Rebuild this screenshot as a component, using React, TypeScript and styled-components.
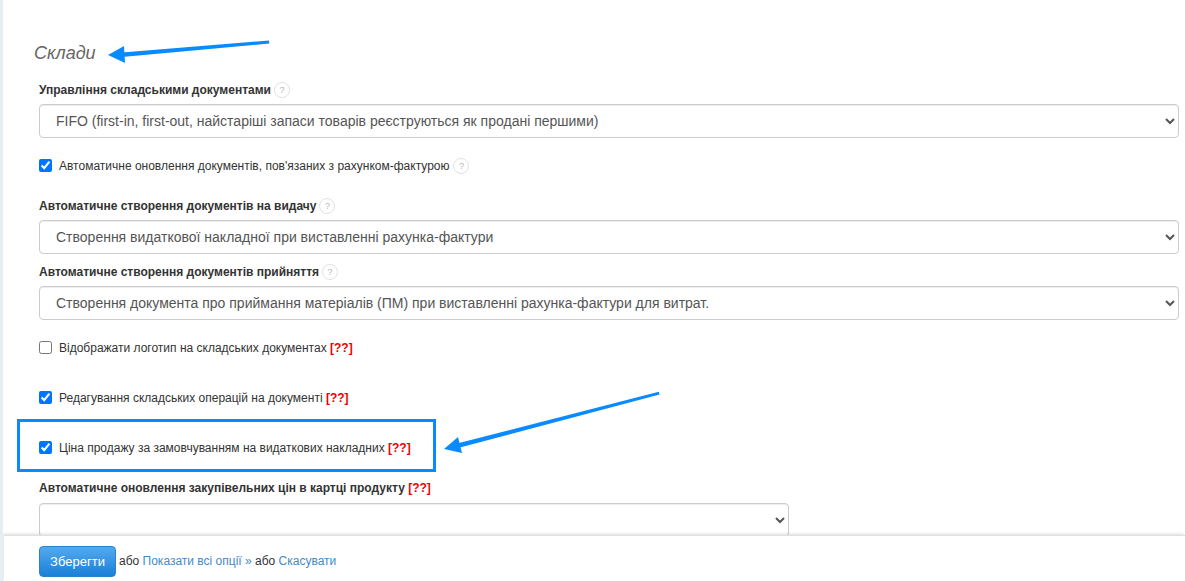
import styled, { createGlobalStyle } from "styled-components";

const GlobalStyle = createGlobalStyle`
  html, body {
    margin: 0;
    padding: 0;
    height: 100%;
    overflow: hidden;
    background: #fff;
    font-family: "Liberation Sans", Arial, sans-serif;
    font-size: 12px;
    color: #333;
  }
`;

const Page = styled.div`
  position: relative;
  height: 581px;
  box-sizing: border-box;
  overflow: hidden;
  border-left: 3px solid #e6edf5;
`;

const Content = styled.div`
  display: flex;
  flex-direction: column;
  padding: 41px 6px 0 36px;
`;

const Heading = styled.h3`
  margin: 0 0 0 -5px;
  height: 24px;
  line-height: 24px;
  font-size: 18px;
  font-weight: 400;
  font-style: italic;
  color: #666;
`;

const Label = styled.label<{ $top: number }>`
  display: flex;
  align-items: center;
  gap: 3px;
  box-sizing: border-box;
  height: 16px;
  padding-top: 2px;
  margin-top: ${(p) => p.$top}px;
  margin-bottom: 7px;
  font-weight: 700;
  line-height: 16px;
`;

const Help = styled.span`
  display: inline-flex;
  align-items: center;
  justify-content: center;
  box-sizing: border-box;
  width: 16px;
  height: 16px;
  border: 1px solid #e2e2e2;
  border-radius: 50%;
  font-size: 9px;
  font-weight: 400;
  color: #b5b5b5;
`;

const Missing = styled.a`
  color: #e00;
  font-weight: 700;
`;

const Select = styled.select<{ $narrow?: boolean }>`
  box-sizing: border-box;
  flex: none;
  width: ${(p) => (p.$narrow ? "750px" : "100%")};
  height: 34px;
  margin-top: ${(p) => (p.$narrow ? "1px" : "0")};
  padding: 6px 12px;
  border: 1px solid #ccc;
  border-radius: 4px;
  background: #fff;
  font-family: inherit;
  font-size: 14px;
  color: #555;
  box-shadow: inset 0 1px 1px rgba(0, 0, 0, 0.075);
`;

const CheckRow = styled.label<{ $top: number }>`
  display: flex;
  align-items: center;
  gap: 7px;
  box-sizing: border-box;
  height: 16px;
  padding-top: 2px;
  margin-top: ${(p) => p.$top}px;
  line-height: 16px;
`;

const HelpAfterCheck = styled(Help)`
  margin-left: -3px;
`;

const Check = styled.input.attrs({ type: "checkbox" })`
  width: 13px;
  height: 13px;
  margin: -2px 0 0;
  flex: none;
`;

const HighlightBox = styled.div`
  position: absolute;
  left: 14px;
  top: 419px;
  width: 419px;
  height: 53px;
  box-sizing: border-box;
  border: 3px solid #0a8aff;
  pointer-events: none;
`;

const Arrow = styled.svg`
  position: absolute;
  left: -3px;
  top: 0;
  width: 1185px;
  height: 581px;
  pointer-events: none;
`;

const Footer = styled.div`
  position: absolute;
  left: 1px;
  right: 0;
  bottom: 0;
  height: 46px;
  box-sizing: border-box;
  display: flex;
  align-items: center;
  gap: 3px;
  padding: 6px 0 0 35px;
  background: #fff;
  border-top: 1px solid #e0e0e0;
  box-shadow: -1px -1px 3px rgba(0, 0, 0, 0.14);
`;

const SaveButton = styled.button`
  box-sizing: border-box;
  width: 77px;
  height: 31px;
  padding: 0;
  border: 1px solid #2a82cc;
  border-radius: 4px;
  background: linear-gradient(to bottom, #54a9ee, #1a80d8);
  font-family: inherit;
  font-size: 13px;
  color: #fff;
`;

const FooterText = styled.span`
  margin-top: -2px;
`;

const FooterLink = styled.a`
  color: #428bca;
`;

export default function App() {
  return (
    <Page>
      <GlobalStyle />
      <Content>
        <Heading>Склади</Heading>
        <Label $top={16}>
          Управління складськими документами <Help>?</Help>
        </Label>
        <Select>
          <option>FIFO (first-in, first-out, найстаріші запаси товарів реєструються як продані першими)</option>
        </Select>
        <CheckRow $top={19}>
          <Check defaultChecked />
          <span>Автоматичне оновлення документів, пов'язаних з рахунком-фактурою</span>
          <HelpAfterCheck>?</HelpAfterCheck>
        </CheckRow>
        <Label $top={24}>
          Автоматичне створення документів на видачу <Help>?</Help>
        </Label>
        <Select>
          <option>Створення видаткової накладної при виставленні рахунка-фактури</option>
        </Select>
        <Label $top={9}>
          Автоматичне створення документів прийняття <Help>?</Help>
        </Label>
        <Select>
          <option>Створення документа про приймання матеріалів (ПМ) при виставленні рахунка-фактури для витрат.</option>
        </Select>
        <CheckRow $top={19}>
          <Check />
          <span>
            Відображати логотип на складських документах <Missing>[??]</Missing>
          </span>
        </CheckRow>
        <CheckRow $top={34}>
          <Check defaultChecked />
          <span>
            Редагування складських операцій на документі <Missing>[??]</Missing>
          </span>
        </CheckRow>
        <CheckRow $top={34}>
          <Check defaultChecked />
          <span>
            Ціна продажу за замовчуванням на видаткових накладних <Missing>[??]</Missing>
          </span>
        </CheckRow>
        <Label $top={24}>
          <span>
            Автоматичне оновлення закупівельних цін в картці продукту <Missing>[??]</Missing>
          </span>
        </Label>
        <Select $narrow>
          <option></option>
        </Select>
      </Content>
      <HighlightBox />
      <Arrow viewBox="0 0 1185 581">
        <path d="M269 40.5 L269.3 43.5 L122 57 L122 52.5 Z" fill="#0a8aff" />
        <path d="M108 55 L124 46 L125 63 Z" fill="#0a8aff" />
        <path d="M658.8 391.8 L659.6 394.6 L458 448 L457 443.5 Z" fill="#0a8aff" />
        <path d="M444 449 L458 437 L462 453 Z" fill="#0a8aff" />
      </Arrow>
      <Footer>
        <SaveButton>Зберегти</SaveButton>
        <FooterText>
          або <FooterLink>Показати всі опції »</FooterLink> або <FooterLink>Скасувати</FooterLink>
        </FooterText>
      </Footer>
    </Page>
  );
}
